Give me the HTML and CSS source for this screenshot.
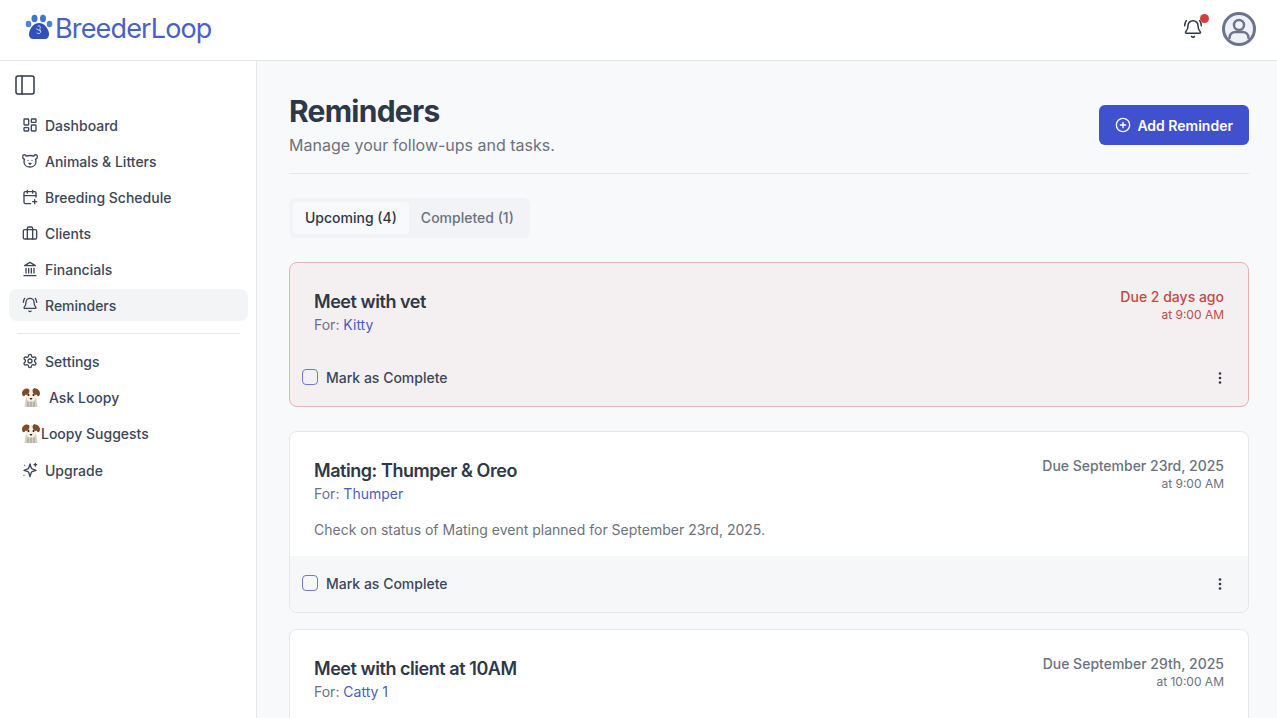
FILE: index.html
```html
<!DOCTYPE html>
<html>
  <head>
    <title>BreederLoop - Reminders</title>
    <link rel="stylesheet" href="styles.css">
  </head>
  <body>
    <svg class="sprites" width="0" height="0">
      <symbol id="dog" viewBox="0 0 18 19">
        <path d="M4 9h10l1.500 10h-13z" fill="#d5cfc2"/>
        <path d="M6 1.500h6l2.500 7.500-3 4.500h-5L3.500 9z" fill="#f5efe3"/>
        <path d="M5 .5C2.500.5 0 2.500 0 5.500c0 2 1.200 3 2.500 2.500l1-1.500 1.500.5 2-2 .5-2.500C7.500 1.500 6.500.5 5 .5z" fill="#7d4c2a"/>
        <path d="M13 .5c2.500 0 5 2 5 5 0 2-1.200 3-2.500 2.500l-1-1.500-1.500.5-2-2-.5-2.500c0-1 1-2.500 2.500-2.500z" fill="#7d4c2a"/>
        <circle cx="6.500" cy="7" r="1" fill="#1f1510"/>
        <circle cx="11.500" cy="7" r="1" fill="#1f1510"/>
        <path d="M7.500 10h3L9 12z" fill="#1f1510"/>
        <path d="M6 14v5M9 14v5M12 14v5" stroke="#8d897e" stroke-width=".8"/>
      </symbol>
    </svg>
    <header class="topbar">
      <a class="logo">
        <svg class="logo-paw" viewBox="0 0 28 26">
          <ellipse cx="3.500" cy="10" rx="2.800" ry="3.200" fill="#4a86d8"/>
          <ellipse cx="9.500" cy="4.500" rx="3" ry="3.800" fill="#3f74cf"/>
          <ellipse cx="18" cy="4.500" rx="3" ry="3.800" fill="#3f74cf"/>
          <ellipse cx="24.500" cy="10" rx="2.800" ry="3.200" fill="#4a86d8"/>
          <path d="M14 9c4.500 0 7 3 9 7 2 4 1 9-3 9H8c-4 0-5-5-3-9 2-4 4.500-7 9-7z" fill="#3350b4"/>
          <path class="paw-mark" d="M13 12c2-1 3 1 2 2.500-1 1.500 1.500 2 .5 4-.7 1.400-2.500 1.500-3.500.5M11.500 15c1 1 3 1 4 2"/>
        </svg>
        <span class="logo-text">BreederLoop</span>
      </a>
      <div class="topbar-actions">
        <span class="bell">
          <svg class="icon-20" viewBox="0 0 24 24"><path d="M10.300 21a2 2 0 0 0 3.400 0"/><path d="M22 8c0-2.300-.8-4.300-2-6"/><path d="M3.300 15.300A1 1 0 0 0 4 17h16a1 1 0 0 0 .7-1.700C19.400 14 18 12.500 18 8A6 6 0 0 0 6 8c0 4.500-1.400 6-2.700 7.300"/><path d="M4 2C2.800 3.700 2 5.700 2 8"/></svg>
          <span class="bell-dot"></span>
        </span>
        <svg class="avatar" viewBox="0 0 36 36">
          <circle cx="18" cy="18" r="15.500" fill="#eef1f7" stroke="#6b7489" stroke-width="3"/>
          <circle cx="18" cy="14" r="5" fill="none" stroke="#6b7489" stroke-width="2.500"/>
          <path d="M8.500 27c0-4 3-6 6-6h7c3 0 6 2 6 6" fill="none" stroke="#6b7489" stroke-width="2.500"/>
        </svg>
      </div>
    </header>
    <div class="shell">
      <aside class="sidebar">
        <button class="collapse">
          <svg viewBox="0 0 24 24" width="24" height="24"><rect x="3" y="3" width="18" height="18" rx="2"/><path d="M9 3v18"/></svg>
        </button>
        <nav class="nav">
          <a class="nav-item"><svg class="icon" viewBox="0 0 24 24"><rect x="3" y="3" width="7" height="9" rx="1"/><rect x="14" y="3" width="7" height="5" rx="1"/><rect x="14" y="12" width="7" height="9" rx="1"/><rect x="3" y="16" width="7" height="5" rx="1"/></svg>Dashboard</a>
          <a class="nav-item"><svg class="icon" viewBox="0 0 24 24"><path d="M6.500 4.800C5 1.500 1 2 1 5.500c0 1.900 1 3.500 2.700 4.200-.5 1.100-.7 2.200-.7 3.300 0 4.700 4 8 9 8s9-3.300 9-8c0-1.100-.2-2.200-.7-3.300C22 9 23 7.400 23 5.500c0-3.500-4-4-5.500-.7C16 4.200 14 3.800 12 3.800s-4 .4-5.500 1z"/><path d="M9 11h.01M15 11h.01M10.500 15.500h3L12 17z"/></svg>Animals &amp; Litters</a>
          <a class="nav-item"><svg class="icon" viewBox="0 0 24 24"><path d="M21 12V6a2 2 0 0 0-2-2H5a2 2 0 0 0-2 2v14a2 2 0 0 0 2 2h8"/><path d="M3 10h18M8 2v4M16 2v4M16 19h6M19 16v6"/></svg>Breeding Schedule</a>
          <a class="nav-item"><svg class="icon" viewBox="0 0 24 24"><rect x="2" y="7" width="20" height="14" rx="2"/><path d="M8 21V5a2 2 0 0 1 2-2h4a2 2 0 0 1 2 2v16"/></svg>Clients</a>
          <a class="nav-item"><svg class="icon" viewBox="0 0 24 24"><path d="M3 22h18M6 18v-7M10 18v-7M14 18v-7M18 18v-7M12 2l8 5H4z"/></svg>Financials</a>
          <a class="nav-item is-active"><svg class="icon" viewBox="0 0 24 24"><path d="M10.300 21a2 2 0 0 0 3.400 0"/><path d="M22 8c0-2.300-.8-4.300-2-6"/><path d="M3.300 15.300A1 1 0 0 0 4 17h16a1 1 0 0 0 .7-1.700C19.400 14 18 12.500 18 8A6 6 0 0 0 6 8c0 4.500-1.400 6-2.700 7.300"/><path d="M4 2C2.800 3.700 2 5.700 2 8"/></svg>Reminders</a>
          <hr class="nav-rule">
          <a class="nav-item"><svg class="icon" viewBox="0 0 24 24"><path d="M12.200 2h-.4a2 2 0 0 0-2 2v.2a2 2 0 0 1-1 1.700l-.4.300a2 2 0 0 1-2 0l-.2-.1a2 2 0 0 0-2.700.7l-.2.400a2 2 0 0 0 .7 2.700l.2.100a2 2 0 0 1 1 1.700v.5a2 2 0 0 1-1 1.700l-.2.100a2 2 0 0 0-.7 2.700l.2.400a2 2 0 0 0 2.700.7l.2-.1a2 2 0 0 1 2 0l.4.300a2 2 0 0 1 1 1.700v.2a2 2 0 0 0 2 2h.4a2 2 0 0 0 2-2v-.2a2 2 0 0 1 1-1.700l.4-.3a2 2 0 0 1 2 0l.2.100a2 2 0 0 0 2.700-.7l.2-.4a2 2 0 0 0-.7-2.700l-.2-.1a2 2 0 0 1-1-1.700v-.5a2 2 0 0 1 1-1.700l.2-.1a2 2 0 0 0 .7-2.700l-.2-.4a2 2 0 0 0-2.700-.7l-.2.100a2 2 0 0 1-2 0l-.4-.3a2 2 0 0 1-1-1.700V4a2 2 0 0 0-2-2z"/><circle cx="12" cy="12" r="3"/></svg>Settings</a>
          <a class="nav-item nav-ask"><svg class="dog"><use href="#dog"/></svg>Ask Loopy</a>
          <a class="nav-item nav-suggest"><svg class="dog"><use href="#dog"/></svg>Loopy Suggests</a>
          <a class="nav-item nav-upgrade"><svg class="icon" viewBox="0 0 24 24"><path d="M12 3l1.900 6a2 2 0 0 0 1.300 1.300L21 12.500l-5.800 2a2 2 0 0 0-1.300 1.300L12 22l-1.900-6.200a2 2 0 0 0-1.300-1.300L3 12.500l5.800-2.200A2 2 0 0 0 10.100 9z"/><path d="M20 2v4M18 4h4M3 20h.01M4 5h.01"/></svg>Upgrade</a>
        </nav>
      </aside>
      <main class="content">
        <div class="page-head">
          <div>
            <h1>Reminders</h1>
            <p class="subtitle">Manage your follow-ups and tasks.</p>
          </div>
          <button class="add-btn">
            <svg viewBox="0 0 24 24" width="16" height="16"><circle cx="12" cy="12" r="10"/><path d="M8 12h8M12 8v8"/></svg>
            Add Reminder
          </button>
        </div>
        <div class="tabs">
          <span class="tab is-current">Upcoming (4)</span>
          <span class="tab">Completed (1)</span>
        </div>
        <section class="card card-overdue">
          <div class="card-body">
            <div>
              <h3>Meet with vet</h3>
              <p class="for">For: <a>Kitty</a></p>
            </div>
            <div class="due">
              <p class="due-date">Due 2 days ago</p>
              <p class="due-time">at 9:00 AM</p>
            </div>
          </div>
          <div class="card-foot">
            <label class="check"><span class="box"></span>Mark as Complete</label>
            <svg class="more" viewBox="0 0 16 16"><circle cx="8" cy="3.500" r="1.300"/><circle cx="8" cy="8" r="1.300"/><circle cx="8" cy="12.500" r="1.300"/></svg>
          </div>
        </section>
        <section class="card">
          <div class="card-body">
            <div>
              <h3>Mating: Thumper &amp; Oreo</h3>
              <p class="for">For: <a>Thumper</a></p>
            </div>
            <div class="due">
              <p class="due-date">Due September 23rd, 2025</p>
              <p class="due-time">at 9:00 AM</p>
            </div>
          </div>
          <p class="note">Check on status of Mating event planned for September 23rd, 2025.</p>
          <div class="card-foot">
            <label class="check"><span class="box"></span>Mark as Complete</label>
            <svg class="more" viewBox="0 0 16 16"><circle cx="8" cy="3.500" r="1.300"/><circle cx="8" cy="8" r="1.300"/><circle cx="8" cy="12.500" r="1.300"/></svg>
          </div>
        </section>
        <section class="card card-last">
          <div class="card-body">
            <div>
              <h3>Meet with client at 10AM</h3>
              <p class="for">For: <a>Catty 1</a></p>
            </div>
            <div class="due">
              <p class="due-date">Due September 29th, 2025</p>
              <p class="due-time">at 10:00 AM</p>
            </div>
          </div>
        </section>
      </main>
    </div>
  </body>
</html>
```
FILE: styles.css
```css
* {
  box-sizing: border-box;
}

html, body {
  height: 100%;
}

body {
  margin: 0;
  overflow: hidden;
  background-color: #f8f9fb;
  color: #2f3848;
  font-family: Inter, "Noto Sans", sans-serif;
}

h1, h3, p {
  margin: 0;
}

svg {
  fill: none;
  stroke: currentColor;
  stroke-width: 2;
  stroke-linecap: round;
  stroke-linejoin: round;
  flex-shrink: 0;
}

.sprites {
  position: absolute;
}

.topbar {
  height: 61px;
  padding: 0 20px 2px 25px;
  display: flex;
  align-items: center;
  justify-content: space-between;
  background-color: #fff;
  border-bottom: 1px solid #e5e7eb;
}

.logo {
  margin-bottom: 2px;
  display: flex;
  align-items: center;
}

.logo-paw {
  width: 28px;
  height: 26px;
  margin-bottom: 2px;
  stroke: none;
}

.paw-mark {
  stroke: #c9d6f2;
  stroke-width: 1;
}

.logo-text {
  margin-left: 2px;
  font-size: 27px;
  letter-spacing: -0.85px;
  color: #4a60c4;
}

.topbar-actions {
  display: flex;
  align-items: center;
  gap: 18px;
}

.bell {
  position: relative;
  display: flex;
  color: #2f3848;
}

.icon-20 {
  width: 20px;
  height: 20px;
  stroke-width: 1.800;
}

.bell-dot {
  position: absolute;
  top: -5px;
  right: -6px;
  width: 9px;
  height: 9px;
  border-radius: 50%;
  background-color: #d23f3f;
}

.avatar {
  width: 36px;
  height: 36px;
  stroke: none;
}

.shell {
  display: flex;
  height: calc(100vh - 61px);
}

.sidebar {
  width: 257px;
  padding: 12px 8px 0 9px;
  background-color: #fff;
  border-right: 1px solid #e5e7eb;
  flex-shrink: 0;
}

.collapse {
  display: block;
  width: 24px;
  height: 24px;
  margin-left: 4px;
  padding: 0;
  border: 0;
  background: none;
  color: #2f3848;
}

.collapse svg {
  stroke-width: 1.500;
}

.nav {
  margin-top: 12px;
  display: flex;
  flex-direction: column;
  gap: 4px;
}

.nav-item {
  height: 32px;
  padding: 0 13px;
  display: flex;
  align-items: center;
  gap: 7px;
  border-radius: 8px;
  font-size: 14px;
  font-weight: 500;
  color: #3d4658;
}

.nav-item.is-active {
  background-color: #f3f4f6;
}

.icon {
  width: 16px;
  height: 16px;
}

.dog {
  width: 18px;
  height: 19px;
  stroke: none;
}

.nav-ask {
  gap: 9px;
}

.nav-suggest {
  gap: 1px;
}

.nav-upgrade {
  margin-top: 1px;
}

.nav-rule {
  width: 223px;
  margin: 8px 8px 7px;
  border: 0;
  border-top: 1px solid #e5e7eb;
}

.content {
  flex: 1;
  padding: 32px 28px 0 32px;
  overflow: hidden;
}

.page-head {
  height: 81px;
  display: flex;
  justify-content: space-between;
  align-items: flex-start;
  border-bottom: 1px solid #e5e7eb;
}

h1 {
  font-size: 30px;
  line-height: 36px;
  font-weight: 700;
  letter-spacing: -0.75px;
  color: #2f3848;
}

.subtitle {
  margin-top: 4px;
  font-size: 16px;
  line-height: 24px;
  color: #6b7280;
}

.add-btn {
  height: 40px;
  margin-top: 12px;
  padding: 0 16px;
  display: flex;
  align-items: center;
  gap: 6px;
  border: 0;
  border-radius: 6px;
  background-color: #3f51cc;
  color: #fff;
  font-family: inherit;
  font-size: 14px;
  font-weight: 600;
}

.tabs {
  width: fit-content;
  margin-top: 24px;
  padding: 4px;
  display: flex;
  border-radius: 6px;
  background-color: #f1f3f6;
}

.tab {
  height: 32px;
  padding: 0 12px 2px;
  display: flex;
  align-items: center;
  border-radius: 4px;
  font-size: 14px;
  font-weight: 500;
  color: #6b7280;
}

.tab.is-current {
  background-color: #f8f9fb;
  color: #2f3848;
}

.card {
  margin-top: 16px;
  border: 1px solid #e5e7eb;
  border-radius: 8px;
  background-color: #fff;
  overflow: hidden;
}

.card-overdue {
  margin-top: 24px;
  margin-bottom: 24px;
  border-color: #e6b3ae;
  background-color: #f4f0f1;
}

.card-last {
  height: 140px;
}

.card-body {
  padding: 24px 24px 0;
  display: flex;
  justify-content: space-between;
}

h3 {
  padding-top: 2px;
  font-size: 18px;
  line-height: 26px;
  font-weight: 600;
  letter-spacing: -0.45px;
  color: #2f3848;
}

.for {
  font-size: 14px;
  line-height: 20px;
  color: #6b7280;
}

.for a {
  color: #4a5cc4;
}

.due {
  text-align: right;
  color: #6b7280;
}

.due-date {
  font-size: 14px;
  line-height: 20px;
  font-weight: 500;
}

.due-time {
  font-size: 12px;
  line-height: 16px;
}

.card-overdue .due {
  color: #c24b45;
}

.note {
  padding: 16px 24px 0;
  font-size: 14px;
  line-height: 20px;
  color: #6b7280;
}

.card-foot {
  margin-top: 16px;
  height: 56px;
  padding: 0 20px 2px 12px;
  display: flex;
  align-items: center;
  justify-content: space-between;
  background-color: #f6f7f9;
}

.card-overdue .card-foot {
  margin-top: 15px;
  background-color: transparent;
}

.check {
  display: flex;
  align-items: center;
  gap: 8px;
  font-size: 14px;
  font-weight: 500;
  color: #3d4658;
}

.box {
  width: 16px;
  height: 16px;
  border: 1.500px solid #6c7ad4;
  border-radius: 4px;
}

.more {
  width: 16px;
  height: 16px;
  margin-top: 2px;
  fill: #2f3848;
  stroke: none;
}
```
